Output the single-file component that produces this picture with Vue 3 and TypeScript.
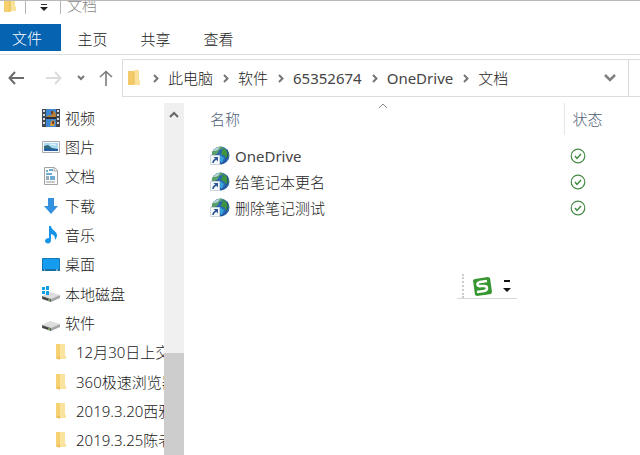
<script setup lang="ts">
type NavIcon = 'video' | 'picture' | 'document' | 'download' | 'music' | 'desktop' | 'system-disk' | 'disk' | 'folder'

interface NavItem {
  label: string
  icon: NavIcon
}

const tabs: string[] = ['主页', '共享', '查看']
const crumbs: string[] = ['此电脑', '软件', '65352674', 'OneDrive', '文档']
const files: string[] = ['OneDrive', '给笔记本更名', '删除笔记测试']

const navItems: NavItem[] = [
  { label: '视频', icon: 'video' },
  { label: '图片', icon: 'picture' },
  { label: '文档', icon: 'document' },
  { label: '下载', icon: 'download' },
  { label: '音乐', icon: 'music' },
  { label: '桌面', icon: 'desktop' },
  { label: '本地磁盘', icon: 'system-disk' },
  { label: '软件', icon: 'disk' },
  { label: '12月30日上交', icon: 'folder' },
  { label: '360极速浏览器', icon: 'folder' },
  { label: '2019.3.20西雅', icon: 'folder' },
  { label: '2019.3.25陈老', icon: 'folder' },
]

// Latin-only names take the regular weight, Chinese ones the light weight.
const isLatin = (text: string): boolean => /^[\w.]+$/.test(text)
</script>

<template>
  <div class="explorer">
    <header class="titlebar">
      <svg class="title-folder" viewBox="0 0 12 18" aria-hidden="true">
        <path d="M0 1h7v16H0z" fill="#f5d06d" />
        <path d="M6 0h5v11l1 1v4H6z" fill="#fae29a" />
        <path d="M6 2v14" stroke="#e6b64c" />
      </svg>
      <span class="separator"></span>
      <button class="plain customize" aria-label="自定义快速访问工具栏">
        <svg width="8" height="8" viewBox="0 0 8 8"><path d="M1 0h6v1H1z" fill="#333" /><path d="M0 3h8L4 7z" fill="#222" /></svg>
      </button>
      <span class="separator"></span>
      <span class="title">文档</span>
    </header>

    <nav class="ribbon">
      <button class="plain file-tab">文件</button>
      <button v-for="tab in tabs" :key="tab" class="plain tab">{{ tab }}</button>
    </nav>

    <div class="toolbar">
      <button class="plain back" aria-label="后退">
        <svg width="16" height="14" viewBox="0 0 16 14"><path d="M7 1L1.500 7L7 13M2 7h14" fill="none" stroke="#6c6c6c" stroke-width="2" /></svg>
      </button>
      <button class="plain forward" aria-label="前进" disabled>
        <svg width="16" height="14" viewBox="0 0 16 14"><path d="M9 1L14.500 7L9 13M14 7H0" fill="none" stroke="#dcdcdc" stroke-width="2" /></svg>
      </button>
      <button class="plain recent" aria-label="最近浏览的位置">
        <svg width="8" height="6" viewBox="0 0 8 6"><path d="M1 1l3 3l3-3" fill="none" stroke="#777" stroke-width="2" /></svg>
      </button>
      <button class="plain up" aria-label="向上">
        <svg width="14" height="16" viewBox="0 0 14 16"><path d="M1 7l6-5.500L13 7M7 2v14" fill="none" stroke="#7a7a7a" stroke-width="1.600" /></svg>
      </button>
      <div class="address">
        <svg class="address-folder" viewBox="0 0 12 16" aria-hidden="true">
          <path d="M0 1h7v14H0z" fill="#f3ca67" />
          <path d="M6 0h5v10l1 1v4H6z" fill="#fae09a" />
          <path d="M6 2v12" stroke="#eabf5b" />
        </svg>
        <template v-for="crumb in crumbs" :key="crumb">
          <svg class="chevron" viewBox="0 0 6 9" aria-hidden="true"><path d="M1 1l3.500 3.500L1 8" fill="none" stroke="#757575" stroke-width="2" /></svg>
          <a class="crumb" :class="{ latin: isLatin(crumb) }" href="#">{{ crumb }}</a>
        </template>
        <button class="plain history" aria-label="以前的位置">
          <svg width="12" height="8" viewBox="0 0 12 8"><path d="M1 1l5 5l5-5" fill="none" stroke="#808080" stroke-width="2.500" /></svg>
        </button>
      </div>
      <div class="search-edge"></div>
    </div>

    <div class="body">
      <ul class="tree">
        <li v-for="item in navItems" :key="item.label">
          <a href="#" class="tree-row" :class="{ nested: item.icon === 'folder' }">
            <svg v-if="item.icon === 'video'" class="tree-icon" viewBox="0 0 18 18">
              <path d="M0 0h18v18H0z" fill="#41474f" />
              <path d="M4 0h10v18H4z" fill="#3d86d1" />
              <path d="M4 8l3-2 2 1 2-5 2 1 1 3v3H4z" fill="#b88136" />
              <path d="M4 8h10v2H4z" fill="#29303a" />
              <path d="M8 17l1-5 3-1 1 3-1 3z" fill="#dc9a3b" />
              <path d="M9 2h2v3H9zM10 12h2v3h-2z" fill="#783c2c" />
              <path d="M2 1v16M16 1v16" stroke="#d9dde1" stroke-width="2" stroke-dasharray="2 2" />
            </svg>
            <svg v-else-if="item.icon === 'picture'" class="tree-icon" viewBox="0 0 18 18">
              <path d="M.5 3.500h17v11H.5z" fill="#f9fafb" stroke="#a9adb1" />
              <path d="M2 5h14v8H2z" fill="#acdaf3" />
              <path d="M2 8l4-1 4 3 6 1v2H2z" fill="#326c7c" />
              <path d="M2 11c5-2 9 1 14 0v2H2z" fill="#245fa5" />
              <path d="M8 6l6 1" stroke="#e9f7fd" />
            </svg>
            <svg v-else-if="item.icon === 'document'" class="tree-icon" viewBox="0 0 18 18">
              <path d="M2.500.5h10l3 3v14h-13z" fill="#fcfcfc" stroke="#a3a3a3" />
              <path d="M12 1v3h3" fill="none" stroke="#aaa" />
              <path d="M4 4h2M7 3h4M4 7h6M8 10h5M8 12h5" stroke="#3c91c7" stroke-width="1.500" />
              <path d="M4 9h3v4H4z" fill="#95abb9" />
              <path d="M4 15h9" stroke="#999" />
            </svg>
            <svg v-else-if="item.icon === 'download'" class="tree-icon" viewBox="0 0 18 18">
              <path d="M6 1h6v8h4l-7 8-7-8h4z" fill="#3491de" />
            </svg>
            <svg v-else-if="item.icon === 'music'" class="tree-icon" viewBox="0 0 18 18">
              <path d="M7 0h2c0 4 6 5 6 9 0 2-1 4-2 5 0-4-1-5-4-6v6c0 5-6 4-6 1 0-2 2-3 4-3z" fill="#1695e8" />
            </svg>
            <svg v-else-if="item.icon === 'desktop'" class="tree-icon" viewBox="0 0 18 18">
              <path d="M.5 3.500h17v12H.5z" fill="#159bef" stroke="#1878b7" />
              <path d="M0 14h18v2H0z" fill="#176ea5" />
              <path d="M2 15h1M14 15h2" stroke="#c8eeff" />
            </svg>
            <svg v-else-if="item.icon !== 'folder'" class="tree-icon" viewBox="0 0 18 18">
              <path d="M0 11l8-4 10 3-9 4z" fill="#dcdddc" />
              <path d="M0 11l9 3v3l-9-3z" fill="#5c5e5c" />
              <path d="M9 14l9-4v3l-9 4z" fill="#a5a7a5" />
              <path d="M1 13l6 2" stroke="#353735" />
              <path d="M6 15h2" stroke="#a4d46c" />
              <path v-if="item.icon === 'system-disk'" d="M0 2h3v3H0zM4 1h3v4H4zM0 6h3v3H0zM4 6h3v4H4z" fill="#139fe5" />
            </svg>
            <svg v-else class="tree-folder" viewBox="0 0 12 16">
              <path d="M1 0h5v15H1z" fill="#f5d172" />
              <path d="M5 0h5v11l1 1v3H5z" fill="#fae39f" />
              <path d="M1 14l4-2v4z" fill="#eebf58" />
            </svg>
            <span>{{ item.label }}</span>
          </a>
        </li>
      </ul>

      <div class="scrollbar">
        <button class="plain scroll-up" aria-label="向上滚动">
          <svg width="10" height="7" viewBox="0 0 10 7"><path d="M1 6l4-4l4 4" fill="none" stroke="#666" stroke-width="2" /></svg>
        </button>
        <div class="thumb"></div>
      </div>

      <main class="content">
        <table class="files">
          <colgroup><col /><col class="status-column" /></colgroup>
          <thead>
            <tr>
              <th class="name-head">
                <span>名称</span>
                <svg class="sort" width="10" height="6" viewBox="0 0 10 6" aria-hidden="true"><path d="M1 5l4-4l4 4" fill="none" stroke="#8b8b8b" /></svg>
              </th>
              <th class="status-head">状态</th>
            </tr>
          </thead>
          <tbody>
            <tr v-for="file in files" :key="file">
              <td>
                <a href="#" class="file">
                  <svg class="globe" viewBox="0 0 20 20">
                    <circle cx="10.500" cy="9.500" r="9" fill="#2b68b4" />
                    <path d="M2 6c3-5 8-6 11-5l-1 2-3 1-1 3-3 2-3 1z" fill="#5e9f68" />
                    <path d="M13 2c3 1 6 4 6 8l-3 3-1-3-4-2 1-3z" fill="#3f9440" />
                    <path d="M3 5c2-3 5-4 7-4L8 4 5 5z" fill="#b5d7dd" />
                    <path d="M10 9l4 3-2 5-3-3z" fill="#36a2dc" />
                    <path d="M17 4c2 5 0 11-6 14" fill="none" stroke="#1f4b8a" />
                    <path d="M.5 9.500h9v9h-9z" fill="#f7fafc" stroke="#ccd4dc" />
                    <path d="M3 17c0-2 1-3 3-4" fill="none" stroke="#2c5592" stroke-width="1.500" />
                    <path d="M3.500 11H8v4.500z" fill="#2c5592" />
                  </svg>
                  <span :class="{ latin: isLatin(file) }">{{ file }}</span>
                </a>
              </td>
              <td class="status">
                <svg width="16" height="16" viewBox="0 0 16 16" role="img" aria-label="可用">
                  <circle cx="8" cy="8" r="6.800" fill="#fff" stroke="#478b47" stroke-width="1.200" />
                  <path d="M5 8l2 2.500l4-4.500" fill="none" stroke="#3c8b3d" stroke-width="1.400" />
                </svg>
              </td>
            </tr>
          </tbody>
        </table>
      </main>
    </div>

    <div class="ime-bar">
      <span class="grip"></span>
      <svg class="ime-logo" viewBox="0 0 22 22" aria-hidden="true">
        <path d="M2 5l2-1 13-2 2 1 2 14-1 2-14 2-2-1z" fill="#36962f" />
        <path d="M16 6l-7 1c-4 1-3 5 1 4l3 0c4 0 4 4 0 5l-7 1" fill="none" stroke="#fff" stroke-width="2.600" />
      </svg>
      <button class="plain ime-menu" aria-label="输入法选项">
        <svg width="8" height="14" viewBox="0 0 8 14"><path d="M1 1h6v2H1zM0 9h8l-4 4z" fill="#111" /></svg>
      </button>
    </div>
  </div>
</template>

<style>
body {
  margin: 0;
  background: #fff;
}
</style>

<style scoped>
.explorer {
  box-sizing: border-box;
  display: flex;
  flex-direction: column;
  height: 100vh;
  overflow: hidden;
  border-top: 1px solid #b9b9b9;
  color: #222;
  font-family: "Noto Sans", "Noto Sans CJK SC", sans-serif;
  font-size: 15px;
  font-weight: 300;
  line-height: 20px;
  background: #fff;
}

.plain {
  display: flex;
  align-items: center;
  justify-content: center;
  padding: 0;
  border: 0;
  background: none;
  color: inherit;
  font: inherit;
}

a {
  color: inherit;
  text-decoration: none;
}

svg {
  display: block;
  flex: none;
}

.latin {
  color: #444;
  font-weight: 400;
}

.titlebar {
  display: flex;
  align-items: flex-start;
  flex: none;
  height: 23px;
  padding-left: 4px;
}

.title-folder {
  width: 12px;
  height: 18px;
  margin-top: -6px;
}

.separator {
  width: 1px;
  height: 13px;
  margin-left: 9px;
  background: #b5b5b5;
}

.customize {
  width: 25px;
  height: 14px;
  margin-left: 5px;
}

.customize + .separator {
  margin-left: 4px;
}

.title {
  margin: -6px 0 0 6px;
  color: #888;
}

.ribbon {
  display: flex;
  flex: none;
  height: 30px;
  border-bottom: 1px solid #dcdcdc;
}

.file-tab {
  justify-content: flex-start;
  width: 61px;
  height: 27px;
  padding-left: 12px;
  background: #0563b1;
  color: #fff;
}

.tab {
  width: 63px;
  height: 30px;
}

.toolbar {
  display: flex;
  align-items: center;
  flex: none;
  height: 38px;
  padding: 4px 0 6px 8px;
}

.forward {
  margin-left: 22px;
}

.recent {
  margin-left: 15px;
}

.up {
  margin-left: 14px;
}

.address {
  box-sizing: border-box;
  display: flex;
  align-items: center;
  flex: 1;
  height: 38px;
  margin-left: 9px;
  padding-left: 5px;
  border: 1px solid #dcdcdc;
}

.address-folder {
  width: 12px;
  height: 16px;
}

.chevron {
  width: 6px;
  height: 9px;
  margin: 0 9px 0 10px;
}

.address-folder + .chevron {
  margin-left: 13px;
}

.history {
  margin-left: auto;
  padding: 0 12px;
}

.search-edge {
  box-sizing: border-box;
  width: 11px;
  height: 38px;
  border: 1px solid #dcdcdc;
  border-width: 1px 0;
}

.body {
  display: flex;
  flex: 1;
  min-height: 0;
}

.tree {
  display: grid;
  grid-auto-rows: 1fr;
  flex: none;
  width: 164px;
  margin: 0;
  padding: 0;
  overflow: hidden;
  list-style: none;
}

.tree-row {
  display: flex;
  align-items: center;
  gap: 5px;
  height: 100%;
  padding-left: 42px;
  white-space: nowrap;
}

.tree-row.nested {
  gap: 9px;
  padding-left: 55px;
}

.tree-icon {
  width: 18px;
  height: 18px;
}

.tree-folder {
  width: 12px;
  height: 16px;
}

.scrollbar {
  display: flex;
  flex-direction: column;
  justify-content: space-between;
  flex: none;
  width: 20px;
  background: #f0f0f0;
}

.scroll-up {
  height: 22px;
}

.thumb {
  height: 29%;
  background: #cdcdcd;
}

.content {
  flex: 1;
  min-width: 0;
}

.files {
  width: 100%;
  table-layout: fixed;
  border-collapse: collapse;
}

.status-column {
  width: 76px;
}

.files th {
  height: 32px;
  padding: 0;
  color: #4d6075;
  font-weight: inherit;
  text-align: left;
}

.files .name-head {
  position: relative;
  padding-left: 26px;
}

.sort {
  position: absolute;
  top: 0;
  left: 51%;
}

.files .status-head {
  padding-left: 8px;
  border-left: 1px solid #e6e6e6;
}

.files tbody::before {
  display: block;
  height: 8px;
  content: "";
}

.files td {
  height: 26px;
  padding: 0;
}

.file {
  display: flex;
  align-items: center;
  gap: 5px;
  padding-left: 26px;
}

.globe {
  width: 20px;
  height: 20px;
}

.files .status {
  padding-left: 6px;
}

/* Floating input-method bar sits over the file list. */
.ime-bar {
  position: absolute;
  top: 273px;
  left: 457px;
  display: flex;
  align-items: center;
  width: 60px;
  height: 25px;
  border-bottom: 1px solid #d7d7d7;
}

.grip {
  height: 24px;
  margin-left: 5px;
  border-left: 2px dotted #ccc;
}

.ime-logo {
  width: 22px;
  height: 22px;
  margin-left: 7px;
}

.ime-menu {
  margin-left: 10px;
}
</style>
